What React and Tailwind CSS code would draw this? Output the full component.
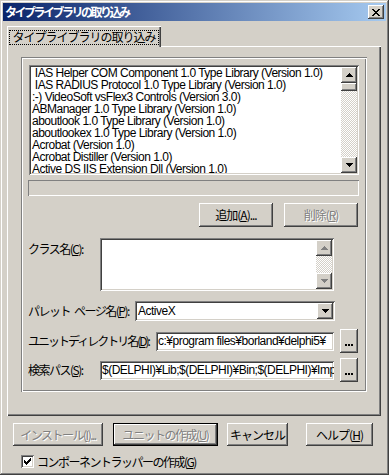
import React from 'react';

// ── Win classic bevels ───────────────────────────────────────────────────────
const raised =
  'shadow-[inset_-1px_-1px_#404040,inset_1px_1px_#ffffff,inset_-2px_-2px_#808080,inset_2px_2px_#d4d0c8]';
const sunken =
  'shadow-[inset_1px_1px_#808080,inset_-1px_-1px_#ffffff,inset_2px_2px_#404040,inset_-2px_-2px_#d4d0c8]';
const dither =
  'bg-[repeating-conic-gradient(#d4d0c8_0%_25%,#ffffff_0%_50%)] bg-[length:2px_2px]';

const jp = 'font-["Noto_Sans_CJK_JP","Liberation_Sans",sans-serif]';
const latin = "font-['Liberation_Sans','Noto_Sans_CJK_JP',sans-serif] tracking-[-0.5px]";

const U = ({ children }) => <span className="underline underline-offset-1">{children}</span>;

const Btn = ({ children, className = '', disabled, isDefault }) => (
  <div className={`${className} ${isDefault ? 'border border-black' : ''} flex`}>
    <div
      className={`flex-1 flex items-center justify-center bg-[#d4d0c8] ${raised} ${
        disabled ? 'text-[#808080] [text-shadow:1px_1px_#ffffff]' : 'text-black'
      }`}
    >
      {children}
    </div>
  </div>
);

const Arrow = ({ dir = 'up', disabled }) => (
  <div className={`w-[16px] h-[16px] flex items-center justify-center bg-[#d4d0c8] ${raised}`}>
    <svg width="7" height="4" viewBox="0 0 7 4">
      {dir === 'up' ? (
        <path d="M3 0h1v1h1v1h1v1h1v1H0V3h1V2h1V1h1z" fill={disabled ? '#808080' : '#000'} />
      ) : (
        <path d="M0 0h7v1H6v1H5v1H4v1H3V3H2V2H1V1H0z" fill={disabled ? '#808080' : '#000'} />
      )}
    </svg>
  </div>
);

const Dots = () => (
  <svg width="8" height="2" viewBox="0 0 8 2" className="mt-[8px]">
    <rect x="0" y="0" width="2" height="2" fill="#000" />
    <rect x="3" y="0" width="2" height="2" fill="#000" />
    <rect x="6" y="0" width="2" height="2" fill="#000" />
  </svg>
);

const libs = [
  ' IAS Helper COM Component 1.0 Type Library (Version 1.0)',
  ' IAS RADIUS Protocol 1.0 Type Library (Version 1.0)',
  ':-) VideoSoft vsFlex3 Controls (Version 3.0)',
  'ABManager 1.0 Type Library (Version 1.0)',
  'aboutlook 1.0 Type Library (Version 1.0)',
  'aboutlookex 1.0 Type Library (Version 1.0)',
  'Acrobat (Version 1.0)',
  'Acrobat Distiller (Version 1.0)',
  'Active DS IIS Extension Dll (Version 1.0)',
];

export default function App() {
  return (
    <div
      className={`w-[389px] h-[475px] bg-[#d4d0c8] p-[3px] flex flex-col text-[12px] leading-none text-black ${jp} shadow-[inset_-1px_-1px_#404040,inset_1px_1px_#d4d0c8,inset_-2px_-2px_#808080,inset_2px_2px_#ffffff]`}
    >
      {/* title bar */}
      <div className="h-[18px] flex items-center justify-between pl-[2px] pr-[2px] bg-[linear-gradient(to_right,#0a246a,#a6caf0)]">
        <span className="text-white font-bold tracking-[-2.5px]">タイプライブラリの取り込み</span>
        <div className={`w-[16px] h-[14px] flex items-center justify-center bg-[#d4d0c8] ${raised}`}>
          <svg width="8" height="7" viewBox="0 0 8 7">
            <path
              d="M0 0h2v1h1v1h2V1h1V0h2v1H7v1H6v1H5v1h1v1h1v1h1v1H6V6H5V5H3v1H2v1H0V6h1V5h1V4h1V3H2V2H1V1H0z"
              fill="#000"
            />
          </svg>
        </div>
      </div>

      {/* tab */}
      <div className="pl-[4px] pt-[5px]">
        <div className="relative z-10 w-[154px] h-[21px] -mb-px bg-[#d4d0c8] flex items-center justify-center shadow-[inset_1px_1px_#ffffff,inset_-1px_0_#404040,inset_-2px_0_#808080]">
          <div className="border border-dotted border-black px-[2px] h-[15px] flex items-center tracking-[-1px] mt-[1px]">
            タイプライブラリの取り込み
          </div>
        </div>

        <div className="w-[374px] h-[370px] pt-[11px] px-[14px] shadow-[inset_1px_1px_#ffffff,inset_-1px_-1px_#404040,inset_-2px_-2px_#808080]">
          {/* etched frame */}
          <div className="h-[335px] pt-[8px] pl-[7px] pr-[8px] flex flex-col shadow-[inset_1px_1px_#808080,inset_-1px_-1px_#ffffff,inset_2px_2px_#ffffff,inset_-2px_-2px_#808080]">
            {/* type library list */}
            <div className={`ml-[1px] h-[110px] bg-white p-[2px] flex ${sunken}`}>
              <div className={`flex-1 pl-[1px] overflow-hidden ${latin}`}>
                {libs.map((l) => (
                  <div key={l} className="h-[12px] leading-[12px] whitespace-pre">
                    {l}
                  </div>
                ))}
              </div>
              <div className="w-[16px] flex flex-col">
                <Arrow dir="up" />
                <div className={`w-[16px] h-[8px] bg-[#d4d0c8] ${raised}`} />
                <div className={`flex-1 ${dither}`} />
                <Arrow dir="down" />
              </div>
            </div>

            {/* status strip */}
            <div className="mt-[5px] h-[16px] shadow-[inset_1px_1px_#808080,inset_-1px_-1px_#ffffff]" />

            {/* add / remove */}
            <div className="mt-[7px] flex justify-end gap-[11px] pr-[1px]">
              <Btn className="w-[74px] h-[24px]">
                <span className="tracking-[-1px]">追加(<U>A</U>)...</span>
              </Btn>
              <Btn className="w-[74px] h-[24px]" disabled>
                <span className="tracking-[-1px]">削除(<U>R</U>)</span>
              </Btn>
            </div>

            {/* class name */}
            <div className="mt-[11px] flex items-start">
              <div className="w-[72px] pt-[5px] tracking-[-1.5px] whitespace-nowrap">
                クラス名(<U>C</U>):
              </div>
              <div className={`w-[234px] h-[53px] bg-white p-[2px] flex justify-end ${sunken}`}>
                <div className="w-[16px] flex flex-col">
                  <Arrow dir="up" disabled />
                  <div className={`flex-1 ${dither}`} />
                  <Arrow dir="down" disabled />
                </div>
              </div>
            </div>

            {/* palette page */}
            <div className="mt-[9px] h-[21px] flex items-center">
              <div className="w-[107px] tracking-[-1.5px] whitespace-nowrap">
                パレット<span className="inline-block w-[4px]" />ページ名(<U>P</U>):
              </div>
              <div className={`w-[200px] h-[20px] bg-white p-[2px] flex items-center ${sunken}`}>
                <span className={`flex-1 pl-[1px] ${latin}`}>ActiveX</span>
                <Arrow dir="down" />
              </div>
            </div>

            {/* unit directory */}
            <div className="mt-[8px] h-[24px] flex items-center">
              <div className="w-[128px] tracking-[-2px] whitespace-nowrap">
                ユニットディレクトリ名(<U>D</U>):
              </div>
              <div
                className={`w-[178px] h-[19px] bg-white px-[2px] flex items-center overflow-hidden whitespace-nowrap ${latin} ${sunken}`}
              >
                c:¥program files¥borland¥delphi5¥
              </div>
              <Btn className="ml-[6px] w-[18px] h-[24px]">
                <Dots />
              </Btn>
            </div>

            {/* search path */}
            <div className="mt-[5px] h-[24px] flex items-center">
              <div className="w-[72px] tracking-[-1.5px] whitespace-nowrap">
                検索パス(<U>S</U>):
              </div>
              <div
                className={`w-[234px] h-[19px] bg-white px-[2px] flex items-center overflow-hidden whitespace-nowrap ${latin} ${sunken}`}
              >
                $(DELPHI)¥Lib;$(DELPHI)¥Bin;$(DELPHI)¥Imports
              </div>
              <Btn className="ml-[6px] w-[18px] h-[24px]">
                <Dots />
              </Btn>
            </div>
          </div>
        </div>
      </div>

      {/* dialog buttons */}
      <div className="mt-[7px] pl-[10px] flex">
        <Btn className="w-[90px] h-[23px]" disabled>
          <span className="tracking-[-1.5px]">インストール(<U>I</U>)...</span>
        </Btn>
        <Btn className="ml-[10px] w-[105px] h-[23px]" disabled isDefault>
          <span className="tracking-[-1.5px]">ユニットの作成(<U>U</U>)</span>
        </Btn>
        <Btn className="ml-[9px] w-[61px] h-[23px]">
          <span className="tracking-[-1px]">キャンセル</span>
        </Btn>
        <Btn className="ml-[18px] w-[67px] h-[23px]">
          <span className="tracking-[-1px]">ヘルプ(<U>H</U>)</span>
        </Btn>
      </div>

      {/* wrapper checkbox */}
      <div className="mt-[9px] pl-[18px] flex items-center gap-[3px]">
        <div className={`w-[13px] h-[13px] bg-white flex items-center justify-center ${sunken}`}>
          <svg width="7" height="7" viewBox="0 0 7 7">
            <path d="M6 0h1v3H6v1H5v1H4v1H3v1H2V6H1V5H0V2h1v1h1v1h1V3h1V2h1V1h1z" fill="#000" />
          </svg>
        </div>
        <span className="tracking-[-1.5px]">
          コンポーネントラッパーの作成(<U>G</U>)
        </span>
      </div>
    </div>
  );
}
